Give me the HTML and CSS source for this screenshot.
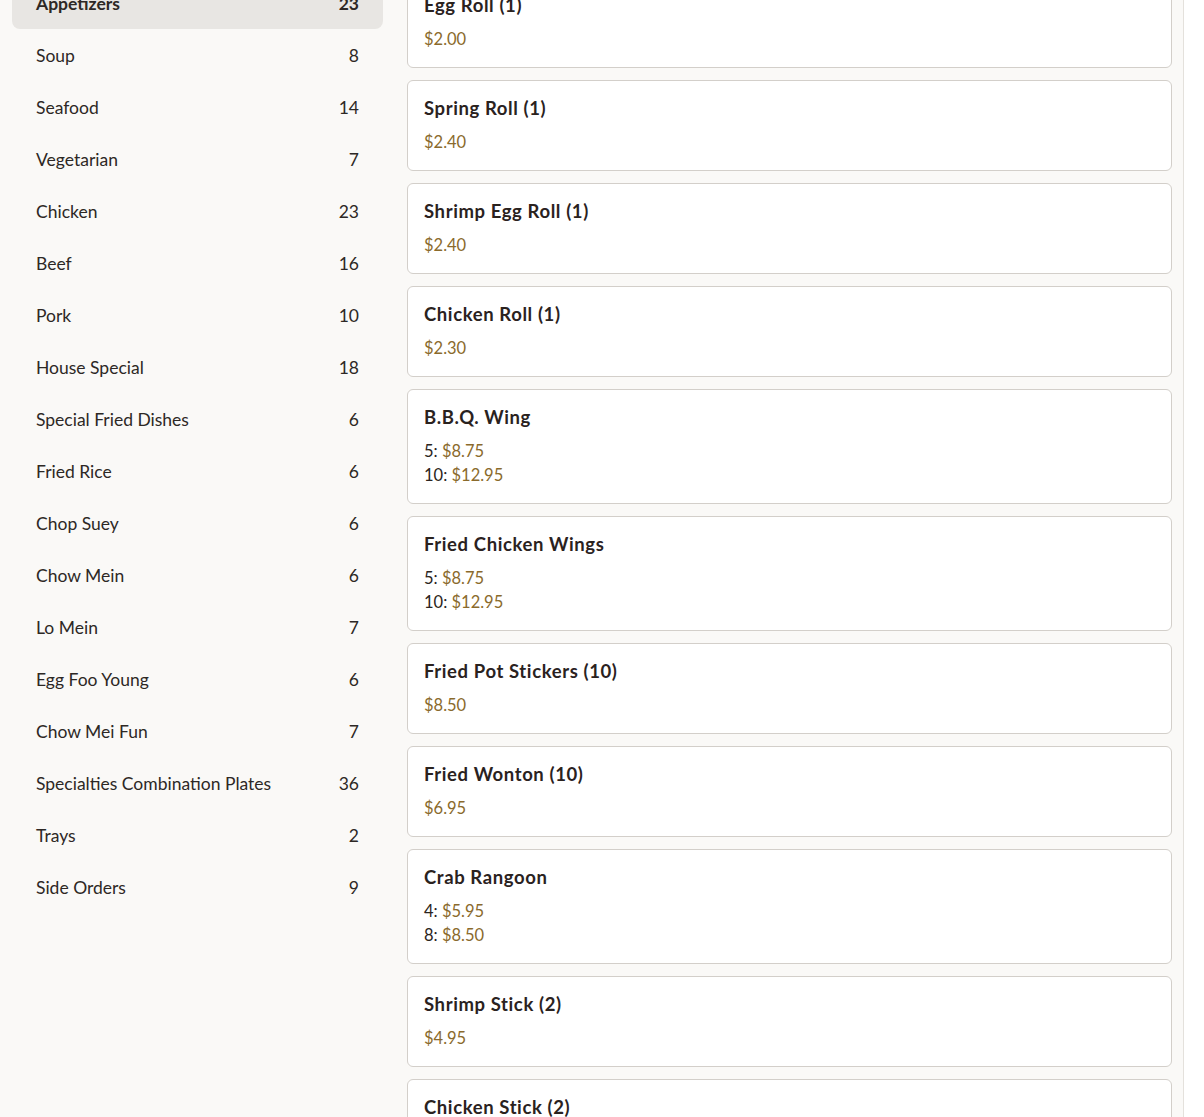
FILE: index.html
```html
<!DOCTYPE html>
<html lang="en">
<head>
  <meta charset="UTF-8" />
  <meta name="viewport" content="width=device-width, initial-scale=1.0" />
  <title>Menu</title>
  <link rel="stylesheet" href="styles.css">
</head>
<body>
  <div class="page">
    <aside class="categories">
      <a class="cat active" href="#"><span>Appetizers</span><span>23</span></a>
      <a class="cat" href="#"><span>Soup</span><span>8</span></a>
      <a class="cat" href="#"><span>Seafood</span><span>14</span></a>
      <a class="cat" href="#"><span>Vegetarian</span><span>7</span></a>
      <a class="cat" href="#"><span>Chicken</span><span>23</span></a>
      <a class="cat" href="#"><span>Beef</span><span>16</span></a>
      <a class="cat" href="#"><span>Pork</span><span>10</span></a>
      <a class="cat" href="#"><span>House Special</span><span>18</span></a>
      <a class="cat" href="#"><span>Special Fried Dishes</span><span>6</span></a>
      <a class="cat" href="#"><span>Fried Rice</span><span>6</span></a>
      <a class="cat" href="#"><span>Chop Suey</span><span>6</span></a>
      <a class="cat" href="#"><span>Chow Mein</span><span>6</span></a>
      <a class="cat" href="#"><span>Lo Mein</span><span>7</span></a>
      <a class="cat" href="#"><span>Egg Foo Young</span><span>6</span></a>
      <a class="cat" href="#"><span>Chow Mei Fun</span><span>7</span></a>
      <a class="cat" href="#"><span>Specialties Combination Plates</span><span>36</span></a>
      <a class="cat" href="#"><span>Trays</span><span>2</span></a>
      <a class="cat" href="#"><span>Side Orders</span><span>9</span></a>
    </aside>

    <main class="items">
      <div class="item">
        <h3>Egg Roll (1)</h3>
        <div class="price">$2.00</div>
      </div>
      <div class="item">
        <h3>Spring Roll (1)</h3>
        <div class="price">$2.40</div>
      </div>
      <div class="item">
        <h3>Shrimp Egg Roll (1)</h3>
        <div class="price">$2.40</div>
      </div>
      <div class="item">
        <h3>Chicken Roll (1)</h3>
        <div class="price">$2.30</div>
      </div>
      <div class="item">
        <h3>B.B.Q. Wing</h3>
        <div class="opt">5: <span class="price">$8.75</span></div>
        <div class="opt">10: <span class="price">$12.95</span></div>
      </div>
      <div class="item">
        <h3>Fried Chicken Wings</h3>
        <div class="opt">5: <span class="price">$8.75</span></div>
        <div class="opt">10: <span class="price">$12.95</span></div>
      </div>
      <div class="item">
        <h3>Fried Pot Stickers (10)</h3>
        <div class="price">$8.50</div>
      </div>
      <div class="item">
        <h3>Fried Wonton (10)</h3>
        <div class="price">$6.95</div>
      </div>
      <div class="item">
        <h3>Crab Rangoon</h3>
        <div class="opt">4: <span class="price">$5.95</span></div>
        <div class="opt">8: <span class="price">$8.50</span></div>
      </div>
      <div class="item">
        <h3>Shrimp Stick (2)</h3>
        <div class="price">$4.95</div>
      </div>
      <div class="item">
        <h3>Chicken Stick (2)</h3>
        <div class="price">$4.95</div>
      </div>
    </main>
  </div>
</body>
</html>
```

FILE: styles.css
```css
html {
  overflow: hidden;
}
body {
  margin: 0;
  background: #ffffff;
  color: #2b2420;
  font-family: 'Lato', 'Noto Sans', sans-serif;
}
.page {
  display: flex;
  gap: 24px;
  width: 1184px;
  box-sizing: border-box;
  padding: 0 11px 0 12px;
  margin-top: -23px;
  background: #faf9f7;
  border-right: 1px solid #e4e1dc;
  min-height: 1160px;
}
.categories {
  width: 371px;
  flex-shrink: 0;
}
.cat {
  display: flex;
  justify-content: space-between;
  padding: 15px 24px 13px;
  line-height: 24px;
  font-size: 17.5px;
  color: #2d2825;
  text-decoration: none;
  border-radius: 8px;
}
.cat.active {
  background: #e8e6e3;
  font-weight: 700;
}
.items {
  flex: 1;
  display: flex;
  flex-direction: column;
  gap: 12px;
}
.item {
  background: #fff;
  border: 1px solid #d3cfca;
  border-radius: 6px;
  padding: 16px;
}
.item h3 {
  margin: 0 0 10px;
  font-size: 18.5px;
  line-height: 23px;
  letter-spacing: 0.6px;
  font-weight: 700;
  color: #2a221e;
}
.opt, .item > .price {
  font-size: 16.5px;
  line-height: 24px;
}
.price {
  color: #8a6a2c;
}
```
